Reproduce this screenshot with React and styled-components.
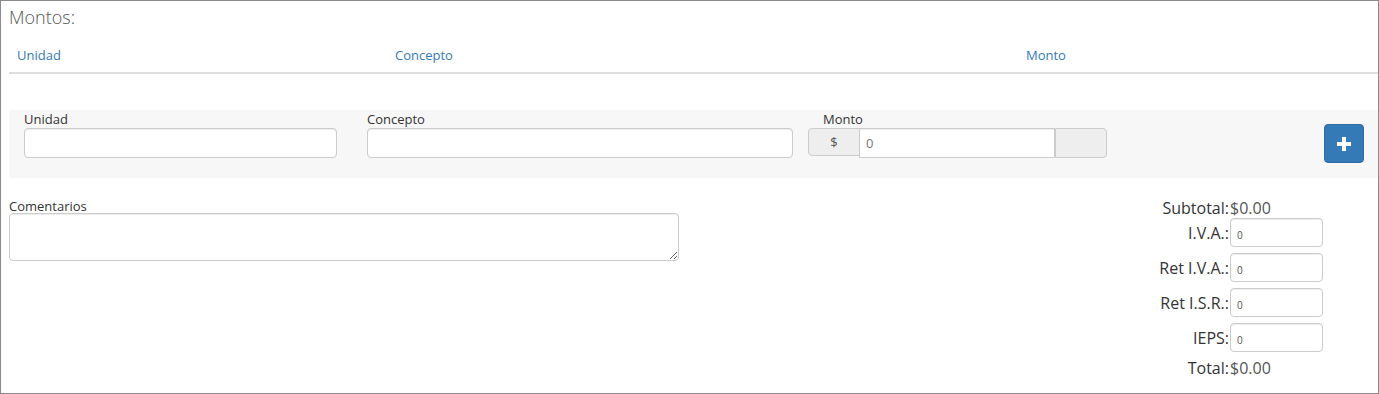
import styled, { createGlobalStyle } from "styled-components";

const Global = createGlobalStyle`
	body {
		margin: 0;
		font-family: "Open Sans", "Noto Sans", sans-serif;
		color: #333;
		background: #fff;
	}
	* { box-sizing: border-box; }
`;

const Frame = styled.div`
	width: 1379px;
	height: 394px;
	border: 1px solid #8a8a8a;
	padding: 0 0 0 8px;
	overflow: hidden;
`;

const Title = styled.h4`
	margin: 0;
	padding-top: 3px;
	font-size: 18px;
	font-weight: 300;
	line-height: 26px;
	color: #555;
`;

const HeadRow = styled.div`
	display: grid;
	grid-template-columns: 378px 631px 1fr;
	margin-top: 7px;
	border-bottom: 2px solid #ddd;
`;

const HeadCell = styled.div`
	padding: 8px 8px 7px;
	font-size: 13px;
	line-height: 20px;
	color: #337ab7;
`;

const Panel = styled.div`
	margin-top: 36px;
	background: #f7f7f7;
	height: 68px;
	display: flex;
	align-items: flex-start;
	padding: 1px 0 0 15px;
`;

const Field = styled.div`
	display: flex;
	flex-direction: column;
	width: ${(p) => p.w}px;
	margin-right: ${(p) => p.mr || 0}px;
`;

const Label = styled.label`
	font-size: 13px;
	line-height: 17px;
	color: #333;
	padding-left: ${(p) => p.pl || 0}px;
`;

const Input = styled.input`
	height: ${(p) => p.h || 30}px;
	width: 100%;
	border: 1px solid #ccc;
	border-radius: 4px;
	box-shadow: inset 0 1px 1px rgba(0, 0, 0, 0.075);
	background: #fff;
	padding: 0 6px;
	font-family: inherit;
	font-size: 12px;
	color: #555;
	outline: none;
`;

const Group = styled.div`
	display: flex;
	height: 30px;
`;

const Addon = styled.span`
	width: 52px;
	display: flex;
	align-items: center;
	justify-content: center;
	background: #eee;
	border: 1px solid #ccc;
	border-radius: ${(p) => (p.right ? "0 4px 4px 0" : "4px 0 0 4px")};
	height: ${(p) => (p.right ? 30 : 28)}px;
	font-size: 13px;
	color: #555;
`;

const GroupInput = styled(Input)`
	border-radius: 0;
	width: 196px;
	margin-left: -1px;
	font-size: 13px;
	color: #777;
`;

const AddButton = styled.button`
	margin-left: auto;
	margin-right: 14px;
	margin-top: 13px;
	width: 40px;
	height: 39px;
	background: #337ab7;
	border: 1px solid #2e6da4;
	border-radius: 4px;
	display: flex;
	align-items: center;
	justify-content: center;
	padding: 0;
`;

const Bottom = styled.div`
	display: flex;
	margin-top: 20px;
`;

const Comments = styled.div`
	width: 670px;
	display: flex;
	flex-direction: column;
`;

const TextArea = styled.textarea`
	margin-top: -2px;
	height: 48px;
	width: 670px;
	border: 1px solid #ccc;
	border-radius: 4px;
	box-shadow: inset 0 1px 1px rgba(0, 0, 0, 0.075);
	resize: vertical;
	font-family: inherit;
	outline: none;
`;

const Totals = styled.div`
	margin-left: auto;
	margin-right: 55px;
	display: grid;
	grid-template-columns: auto 93px;
	column-gap: 1px;
	row-gap: 6px;
	align-items: center;
`;

const TotLabel = styled.span`
	text-align: right;
	font-size: 16px;
	line-height: 20px;
	color: #333;
	margin-bottom: ${(p) => (p.tight ? -6 : 0)}px;
`;

const TotValue = styled.span`
	font-size: 16px;
	line-height: 20px;
	color: #555;
	margin-bottom: ${(p) => (p.tight ? -6 : 0)}px;
`;

const TotInput = styled(Input)`
	height: 29px;
	font-size: 10px;
	padding-top: 4px;
`;

const Plus = () => (
	<svg width="14" height="14" viewBox="0 0 14 14">
		<rect x="5" y="0" width="4" height="14" fill="#fff" />
		<rect x="0" y="5" width="14" height="4" fill="#fff" />
	</svg>
);

const taxes = ["I.V.A.:", "Ret I.V.A.:", "Ret I.S.R.:", "IEPS:"];

function App() {
	return (
		<Frame>
			<Global />
			<Title>Montos:</Title>
			<HeadRow>
				<HeadCell>Unidad</HeadCell>
				<HeadCell>Concepto</HeadCell>
				<HeadCell>Monto</HeadCell>
			</HeadRow>
			<Panel>
				<Field w={313} mr={30}>
					<Label>Unidad</Label>
					<Input />
				</Field>
				<Field w={426} mr={15}>
					<Label>Concepto</Label>
					<Input />
				</Field>
				<Field w={300}>
					<Label pl={15}>Monto</Label>
					<Group>
						<Addon>$</Addon>
						<GroupInput defaultValue="0" />
						<Addon right />
					</Group>
				</Field>
				<AddButton>
					<Plus />
				</AddButton>
			</Panel>
			<Bottom>
				<Comments>
					<Label>Comentarios</Label>
					<TextArea />
				</Comments>
				<Totals>
					<TotLabel tight>Subtotal:</TotLabel>
					<TotValue tight>$0.00</TotValue>
					{taxes.map((t) => [
						<TotLabel key={t}>{t}</TotLabel>,
						<TotInput key={t + "i"} defaultValue="0" />,
					])}
					<TotLabel>Total:</TotLabel>
					<TotValue>$0.00</TotValue>
				</Totals>
			</Bottom>
		</Frame>
	);
}

export default App;
